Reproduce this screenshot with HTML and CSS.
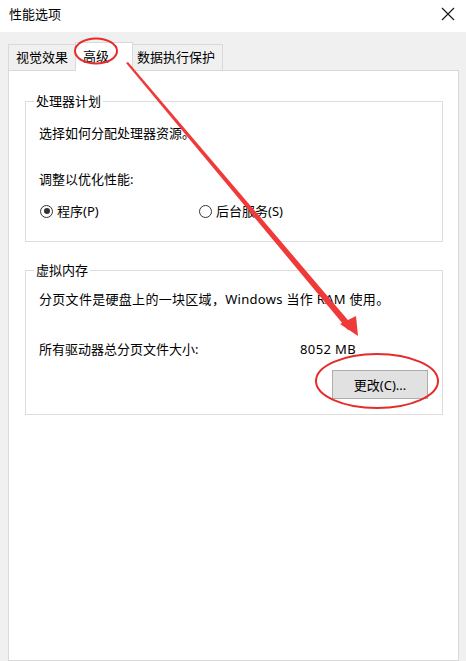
FILE: index.html
```html
<!DOCTYPE html>
<html lang="zh-CN">
<head>
  <meta charset="UTF-8" />
  <title>性能选项</title>
  <link rel="stylesheet" href="styles.css">
</head>
<body>
  <div class="window">
    <div class="titlebar">
      <span class="title">性能选项</span>
      <svg class="close" width="14" height="14" viewBox="0 0 14 14">
        <path d="M1 1 L13 13 M13 1 L1 13" stroke="#1a1a1a" stroke-width="1.2" fill="none"/>
      </svg>
    </div>

    <div class="content">
      <div class="tabs">
        <div class="tab tab-visual">视觉效果</div>
        <div class="tab tab-adv active">高级</div>
        <div class="tab tab-dep">数据执行保护</div>
      </div>

      <div class="panel">
        <fieldset class="group group-cpu">
          <legend>处理器计划</legend>
          <p class="line first">选择如何分配处理器资源。</p>
          <p class="line second">调整以优化性能:</p>
          <div class="radios">
            <label class="radio radio-prog"><span class="dot checked"></span>程序(P)</label>
            <label class="radio"><span class="dot"></span>后台服务(S)</label>
          </div>
        </fieldset>

        <fieldset class="group group-mem">
          <legend>虚拟内存</legend>
          <p class="line first">分页文件是硬盘上的一块区域，Windows 当作 RAM 使用。</p>
          <div class="size-row">
            <span class="size-label">所有驱动器总分页文件大小:</span>
            <span class="size-value">8052 MB</span>
          </div>
          <div class="btn-row">
            <button class="btn">更改(C)...</button>
          </div>
        </fieldset>
      </div>
    </div>

    <!-- red annotation marks drawn over the dialog -->
    <svg class="marks" width="466" height="661" viewBox="0 0 466 661">
      <ellipse cx="96" cy="51" rx="21" ry="12.5" fill="none" stroke="#e52b2b" stroke-width="2"/>
      <polygon points="126,63 128,62 353,326 348,330" fill="#f03a3a"/>
      <polygon points="358,336 340,324 356,316" fill="#f03a3a"/>
      <ellipse cx="377" cy="381" rx="61" ry="27" fill="none" stroke="#e52b2b" stroke-width="2"/>
    </svg>
  </div>
</body>
</html>
```

FILE: styles.css
```css
body {
  margin: 0;
  font-family: 'Noto Sans', 'Noto Sans CJK SC', sans-serif;
  font-size: 13px;
  color: #000;
  background: #f0f0f0;
}

.window {
  position: relative;
  width: 466px;
  height: 661px;
  overflow: hidden;
  background: #f0f0f0;
}

.titlebar {
  height: 32px;
  background: #fff;
  display: flex;
  align-items: center;
  justify-content: space-between;
  padding: 0 11px 4px 9px;
  box-sizing: border-box;
}

.title {
  line-height: 16px;
}

.close {
  display: block;
}

.content {
  padding: 10px 7px 0 8px;
}

.tabs {
  display: flex;
  align-items: flex-end;
  height: 28px;
}

.tab {
  height: 26px;
  line-height: 25px;
  box-sizing: border-box;
  border: 1px solid #d9d9d9;
  border-bottom: none;
  background: #f0f0f0;
  white-space: nowrap;
}

.tab + .tab {
  margin-left: -1px;
}

.tab-visual {
  width: 68px;
  padding-left: 7px;
}

.tab-adv {
  width: 58px;
  padding-left: 7px;
}

.tab-dep {
  width: 91px;
  padding-left: 4px;
}

.tab.active {
  height: 29px;
  line-height: 27px;
  background: #fff;
  position: relative;
  z-index: 1;
  margin-bottom: -1px;
}

.panel {
  height: 591px;
  box-sizing: border-box;
  background: #fff;
  border: 1px solid #d9d9d9;
  padding: 0 15px 0 16px;
}

.group {
  margin: 0;
  padding: 0 14px 0 13px;
  border: 1px solid #dcdcdc;
}

.group legend {
  padding: 0 2px;
  margin-left: -5px;
  line-height: 16px;
}

.group-cpu {
  margin-top: 22px;
  height: 149px;
  box-sizing: border-box;
}

.group-mem {
  margin-top: 20px;
  height: 153px;
  box-sizing: border-box;
}

.line {
  margin: 0;
  line-height: 16px;
  white-space: nowrap;
}

.group-cpu .first {
  margin-top: 16px;
}

.group-cpu .second {
  margin-top: 30px;
}

.group-mem .first {
  margin-top: 13px;
  letter-spacing: 0.3px;
}

.radios {
  display: flex;
  margin-top: 16px;
  line-height: 16px;
}

.radio {
  display: flex;
  align-items: center;
  gap: 4px;
}

.radio-prog {
  width: 159px;
  margin-left: 1px;
}

.dot {
  width: 11px;
  height: 11px;
  border: 1px solid #333;
  border-radius: 50%;
  position: relative;
}

.dot.checked::after {
  content: "";
  position: absolute;
  left: 2.5px;
  top: 2.5px;
  width: 6px;
  height: 6px;
  border-radius: 50%;
  background: #333;
}

.size-row {
  display: flex;
  margin-top: 34px;
  line-height: 16px;
}

.size-label {
  width: 261px;
}

.size-value {
  letter-spacing: 0.4px;
}

.btn-row {
  display: flex;
  justify-content: flex-end;
  margin-top: 13px;
}

.btn {
  width: 96px;
  height: 29px;
  font-family: inherit;
  font-size: 13px;
  color: #000;
  background: #e1e1e1;
  border: 1px solid #adadad;
  padding: 0;
}

.marks {
  position: absolute;
  left: 0;
  top: 0;
  z-index: 2;
  pointer-events: none;
}
```
